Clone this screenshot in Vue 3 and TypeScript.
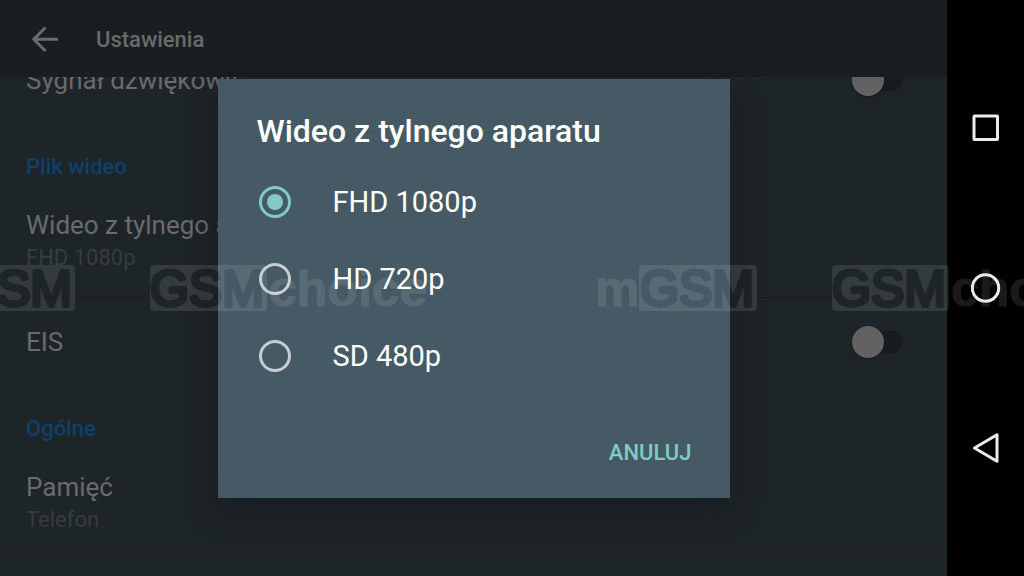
<script setup lang="ts">
import { ref } from 'vue'

interface VideoOption {
  id: string
  label: string
}

const options: VideoOption[] = [
  { id: 'fhd', label: 'FHD 1080p' },
  { id: 'hd', label: 'HD 720p' },
  { id: 'sd', label: 'SD 480p' },
]

const selected = ref<string>('fhd')
const sound = ref<boolean>(false)
const stabilization = ref<boolean>(false)

// Horizontal starts of the repeated watermark tiles
const tiles: number[] = [-682, 0, 682]
</script>

<template>
  <div class="device">
    <div class="screen">
      <header class="app-bar">
        <button class="back" type="button" aria-label="Wstecz">
          <svg width="28" height="28" viewBox="0 0 28 28" fill="none" stroke="currentColor" stroke-width="3">
            <path d="M13.5 1.5 L1.8 13.3 L13.5 25 M2 13.3 H26" />
          </svg>
        </button>
        <h1>Ustawienia</h1>
      </header>

      <main class="viewport">
        <div class="settings">
          <label class="item">
            <span class="name">Sygnał dźwiękowy</span>
            <input v-model="sound" class="switch" type="checkbox" />
          </label>

          <h2>Plik wideo</h2>
          <div class="item stacked">
            <span class="name">Wideo z tylnego aparatu</span>
            <span class="summary">FHD 1080p</span>
          </div>
          <label class="item">
            <span class="name">EIS</span>
            <input v-model="stabilization" class="switch" type="checkbox" />
          </label>

          <h2>Ogólne</h2>
          <div class="item stacked">
            <span class="name">Pamięć</span>
            <span class="summary">Telefon</span>
          </div>
        </div>
      </main>

      <div class="overlay">
        <form class="dialog" role="dialog" aria-labelledby="dialog-title" @submit.prevent>
          <h2 id="dialog-title" class="dialog-title">Wideo z tylnego aparatu</h2>
          <label v-for="option in options" :key="option.id" class="option">
            <input v-model="selected" type="radio" name="video" :value="option.id" />
            <span>{{ option.label }}</span>
          </label>
          <div class="actions">
            <button type="button">ANULUJ</button>
          </div>
        </form>
      </div>
    </div>

    <svg class="watermark" aria-hidden="true">
      <defs>
        <mask id="cutout" maskUnits="userSpaceOnUse" x="-700" y="0" width="3000" height="46">
          <g v-for="x in tiles" :key="x" :transform="`translate(${x} 0)`">
            <rect x="150" y="0" width="117" height="46" rx="4" fill="#fff" />
            <text class="mark knock" x="150" y="41">GSM</text>
            <text class="mark" x="269" y="41">choice</text>
            <text class="mark" x="595" y="41">m</text>
            <rect x="639" y="0" width="118" height="46" rx="4" fill="#fff" />
            <text class="mark knock" x="640" y="41">GSM</text>
          </g>
        </mask>
      </defs>
      <rect width="100%" height="46" fill="#fff" fill-opacity="0.1" mask="url(#cutout)" />
    </svg>

    <nav class="nav-bar">
      <button type="button" aria-label="Ostatnie">
        <svg width="30" height="30" viewBox="0 0 30 30">
          <rect x="3" y="3" width="23.5" height="23.5" rx="0.5" />
        </svg>
      </button>
      <button type="button" aria-label="Ekran główny">
        <svg width="30" height="30" viewBox="0 0 30 30">
          <circle cx="14.5" cy="15" r="13.2" />
        </svg>
      </button>
      <button type="button" aria-label="Wstecz">
        <svg width="30" height="30" viewBox="0 0 30 30">
          <path d="M3.5 15 L26 1.8 V28.2 Z" />
        </svg>
      </button>
    </nav>
  </div>
</template>

<style>
body {
  margin: 0;
  background: #000;
}
</style>

<style scoped>
.device {
  position: relative;
  display: flex;
  height: 100vh;
  overflow: hidden;
  background: #000;
  font-family: Roboto, "Noto Sans", sans-serif;
}

button {
  padding: 0;
  border: 0;
  background: none;
  font: inherit;
  color: inherit;
}

h1,
h2 {
  margin: 0;
  font-weight: 500;
}

.screen {
  position: relative;
  display: flex;
  flex: 1;
  flex-direction: column;
  min-width: 0;
  background: #1e2528;
  color: #696b6c;
}

.app-bar {
  display: flex;
  flex: none;
  align-items: center;
  gap: 36px;
  height: 77px;
  padding: 2px 0 0 32px;
  box-sizing: border-box;
  background: #191e21;
}

.back {
  display: flex;
}

.app-bar h1 {
  font-size: 22px;
  line-height: 30px;
}

.viewport {
  flex: 1;
  min-height: 0;
  overflow: hidden;
}

.settings {
  margin-top: -41px;
}

.settings h2 {
  padding: 28px 26px 15px;
  font-size: 22px;
  line-height: 30px;
  color: #0e406a;
}

.item {
  display: flex;
  align-items: center;
  justify-content: space-between;
  min-height: 88px;
  padding: 0 44px 0 26px;
}

.item.stacked {
  flex-direction: column;
  align-items: flex-start;
  justify-content: flex-start;
  padding-top: 12px;
  border-bottom: 1px solid #1a2023;
}

.name {
  font-size: 26px;
  line-height: 32px;
}

.summary {
  font-size: 22px;
  line-height: 34px;
  color: #353c40;
}

.switch {
  display: grid;
  align-items: center;
  width: 51px;
  height: 32px;
  margin: 0;
  appearance: none;
}

.switch::before,
.switch::after {
  content: "";
  grid-area: 1 / 1;
}

.switch::before {
  justify-self: end;
  width: 40px;
  height: 22px;
  border-radius: 11px;
  background: #171c1f;
}

.switch::after {
  width: 32px;
  height: 32px;
  border-radius: 50%;
  background: #626262;
  box-shadow: 0 1px 2px #12171a;
}

.overlay {
  position: absolute;
  inset: 0;
  display: flex;
  align-items: center;
  justify-content: center;
}

.dialog {
  width: 512px;
  max-width: 90%;
  padding: 33px 0 16px;
  background: #465a65;
  box-shadow: 0 12px 32px rgba(16, 16, 20, 0.45);
  color: #fff;
}

.dialog-title {
  padding: 0 39px 14px;
  font-size: 32px;
  line-height: 38px;
}

.option {
  display: flex;
  align-items: center;
  gap: 42px;
  height: 77px;
  padding: 0 41px;
  font-size: 29px;
}

.option input {
  display: grid;
  place-items: center;
  width: 32px;
  height: 32px;
  margin: 0;
  box-sizing: border-box;
  border: 3px solid #c8cdd1;
  border-radius: 50%;
  appearance: none;
}

.option input:checked {
  border-color: #80cbc4;
}

.option input:checked::before {
  content: "";
  width: 16px;
  height: 16px;
  border-radius: 50%;
  background: #80cbc4;
}

.actions {
  display: flex;
  justify-content: flex-end;
  padding: 29px 25px 0;
}

.actions button {
  height: 58px;
  padding: 0 13px;
  font-size: 22px;
  font-weight: 500;
  color: #80cbc4;
}

.watermark {
  position: absolute;
  top: calc(50% - 23px);
  left: 0;
  width: 100%;
  height: 46px;
  pointer-events: none;
}

.mark {
  font: bold 50px "Liberation Sans", sans-serif;
  fill: #fff;
  stroke: #fff;
  stroke-width: 1px;
  stroke-linejoin: round;
}

.knock {
  font-weight: 400;
  fill: #000;
  stroke: #000;
  stroke-width: 4px;
}

.nav-bar {
  position: relative;
  display: flex;
  flex: none;
  flex-direction: column;
  justify-content: center;
  width: 77px;
}

.nav-bar button {
  display: grid;
  place-items: center;
  height: 160px;
}

.nav-bar svg {
  fill: none;
  stroke: #ececec;
  stroke-width: 3px;
  stroke-linejoin: round;
}
</style>
